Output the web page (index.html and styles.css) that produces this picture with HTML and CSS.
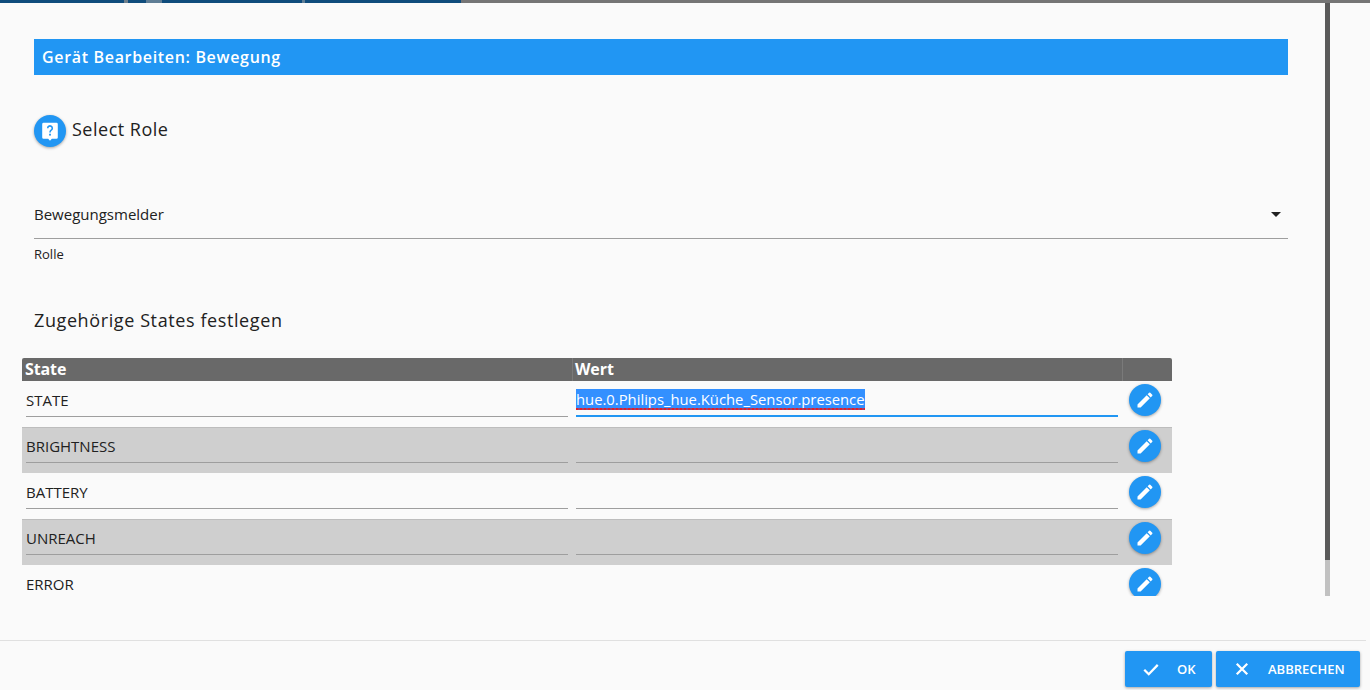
FILE: index.html
```html
<!DOCTYPE html>
<html lang="de">
<head>
<meta charset="utf-8">
<title>Gerät Bearbeiten</title>
<link rel="stylesheet" href="styles.css">
</head>
<body>
<div class="strip"><div class="strip-dark"></div><div class="strip-grey"></div></div>
<main class="dialog">
  <div class="content">
    <div class="thumb"></div>
    <h1 class="title">Gerät Bearbeiten: Bewegung</h1>
    <div class="role-head">
      <span class="fab"><svg viewBox="0 0 24 24" class="ico-role"><path d="M5 3h14a1.5 1.5 0 0 1 1.5 1.5V19a1.5 1.5 0 0 1-1.5 1.5h-5L12 22.5 10 20.5H5A1.5 1.5 0 0 1 3.500 19V4.500A1.500 1.500 0 0 1 5 3z" fill="#fff"/><path d="M9.500 9a2.500 2.500 0 1 1 3.800 2.100c-.8.500-1.300 1-1.300 2.400" fill="none" stroke="#2196f3" stroke-width="1.700"/><rect x="11" y="15" width="2" height="2" fill="#2196f3"/></svg></span>
      <h2 class="role-title">Select Role</h2>
    </div>
    <div class="select">
      <span class="select-value">Bewegungsmelder</span>
      <span class="caret"></span>
    </div>
    <div class="select-label">Rolle</div>
    <h2 class="states-title">Zugehörige States festlegen</h2>
    <div class="table">
      <div class="row head"><div class="cell">State</div><div class="cell">Wert</div><div class="cell"></div></div>
      <div class="row">
        <div class="cell"><div class="field">STATE</div></div>
        <div class="cell"><div class="field focus"><span class="sel">hue.0.Philips_hue.Küche_Sensor.presence</span></div></div>
        <div class="cell act"><span class="fab"><svg viewBox="0 0 24 24" class="ico-pen"><path d="M3 17.250V21h3.750L17.810 9.940l-3.750-3.750L3 17.250zM20.710 7.040a1 1 0 0 0 0-1.410l-2.340-2.340a1 1 0 0 0-1.410 0l-1.830 1.830 3.750 3.750 1.830-1.830z" fill="#fff"/></svg></span></div>
      </div>
      <div class="row alt">
        <div class="cell"><div class="field">BRIGHTNESS</div></div>
        <div class="cell"><div class="field"></div></div>
        <div class="cell act"><span class="fab"><svg viewBox="0 0 24 24" class="ico-pen"><path d="M3 17.250V21h3.750L17.810 9.940l-3.750-3.750L3 17.250zM20.710 7.040a1 1 0 0 0 0-1.410l-2.340-2.340a1 1 0 0 0-1.410 0l-1.830 1.830 3.750 3.750 1.830-1.830z" fill="#fff"/></svg></span></div>
      </div>
      <div class="row">
        <div class="cell"><div class="field">BATTERY</div></div>
        <div class="cell"><div class="field"></div></div>
        <div class="cell act"><span class="fab"><svg viewBox="0 0 24 24" class="ico-pen"><path d="M3 17.250V21h3.750L17.810 9.940l-3.750-3.750L3 17.250zM20.710 7.040a1 1 0 0 0 0-1.410l-2.340-2.340a1 1 0 0 0-1.410 0l-1.830 1.830 3.750 3.750 1.830-1.830z" fill="#fff"/></svg></span></div>
      </div>
      <div class="row alt">
        <div class="cell"><div class="field">UNREACH</div></div>
        <div class="cell"><div class="field"></div></div>
        <div class="cell act"><span class="fab"><svg viewBox="0 0 24 24" class="ico-pen"><path d="M3 17.250V21h3.750L17.810 9.940l-3.750-3.750L3 17.250zM20.710 7.040a1 1 0 0 0 0-1.410l-2.340-2.340a1 1 0 0 0-1.410 0l-1.830 1.830 3.750 3.750 1.830-1.830z" fill="#fff"/></svg></span></div>
      </div>
      <div class="row">
        <div class="cell"><div class="field">ERROR</div></div>
        <div class="cell"><div class="field"></div></div>
        <div class="cell act"><span class="fab"><svg viewBox="0 0 24 24" class="ico-pen"><path d="M3 17.250V21h3.750L17.810 9.940l-3.750-3.750L3 17.250zM20.710 7.040a1 1 0 0 0 0-1.410l-2.340-2.340a1 1 0 0 0-1.410 0l-1.830 1.830 3.750 3.750 1.830-1.830z" fill="#fff"/></svg></span></div>
      </div>
    </div>
  </div>
  <footer class="footer">
    <button class="btn btn-ok"><svg viewBox="0 0 24 24" class="btn-ico"><path d="M3 13l6 6L21 6.500" fill="none" stroke="#fff" stroke-width="3"/></svg><span>OK</span></button>
    <button class="btn btn-cancel"><svg viewBox="0 0 24 24" class="btn-ico"><path d="M5 5l14 14M19 5L5 19" fill="none" stroke="#fff" stroke-width="3"/></svg><span>ABBRECHEN</span></button>
  </footer>
</main>
</body>
</html>
```
FILE: styles.css
```css
* { box-sizing: border-box; }
html, body { margin: 0; height: 100%; overflow: hidden; }
body { background: #fafafa; font-family: "Open Sans", "Noto Sans", sans-serif; color: #212121; display: flex; flex-direction: column; }
h1, h2 { margin: 0; font-weight: 400; }

.strip { height: 3px; display: flex; flex: none; }
.strip-dark { width: 461px; background: linear-gradient(90deg, #0f4c7c 124px, #6f7f8b 124px, #6f7f8b 128px, #0f4c7c 128px, #0f4c7c 146px, #5f7d95 146px, #5f7d95 162px, #0f4c7c 162px, #0f4c7c 302px, #5f7d95 302px, #5f7d95 305px, #0f4c7c 305px); }
.strip-grey { flex: 1; background: #757575; }

.dialog { flex: 1; display: flex; flex-direction: column; min-height: 0; }
.content { position: relative; height: 593px; width: 1330px; flex: none; overflow: hidden; padding: 36px 42px 0 22px; }
.thumb { position: absolute; right: 0; top: 0; bottom: 0; width: 5px; background: linear-gradient(#5a5a5a 0, #5a5a5a 557px, #c1c1c1 557px); }

.title { margin-left: 12px; height: 36px; line-height: 36px; padding-left: 8px; background: #2196f3; color: #fff; font-size: 16px; font-weight: 600; letter-spacing: .67px; }

.role-head { margin: 40px 0 0 12px; height: 32px; display: flex; align-items: center; gap: 6px; }
.role-title { font-size: 18px; letter-spacing: .5px; line-height: 28px; padding-bottom: 4px; }

.fab { width: 32px; height: 32px; border-radius: 50%; background: #2196f3; display: flex; align-items: center; justify-content: center; flex: none; box-shadow: 0 1px 3px rgba(0,0,0,.35); }
.ico-role { width: 22px; height: 22px; }
.ico-pen { width: 20px; height: 20px; }

.select { margin: 52px 0 0 12px; height: 40px; border-bottom: 1px solid #9e9e9e; display: flex; align-items: center; justify-content: space-between; padding: 0 7px 9px 0; font-size: 15px; }
.caret { width: 0; height: 0; border: 5px solid transparent; border-top-color: #212121; border-bottom: 0; }
.select-label { margin: 7px 0 0 12px; font-size: 13px; line-height: 16px; }
.states-title { margin: 46px 0 0 12px; font-size: 18px; letter-spacing: .6px; line-height: 24px; }

.table { margin-top: 26px; width: 1150px; }
.row { display: grid; grid-template-columns: 550px 550px 50px; height: 46px; }
.row.head { height: 23px; background: #696969; color: #fff; font-weight: 700; font-size: 16px; letter-spacing: -.1px; line-height: 22px; border-radius: 2px 2px 0 0; }
.row.alt { background: #cfcfcf; box-shadow: inset 0 1px 0 #bdbdbd; }
.row.head .cell { padding-left: 3px; }
.row.head .cell + .cell { box-shadow: inset 1px 0 0 #7a7a7a; }
.cell { padding: 0 4px; min-width: 0; }
.field { height: 36px; border-bottom: 1px solid #9e9e9e; font-size: 15px; line-height: 20px; padding-top: 9px; }
.field.focus { border-bottom: 2px solid #2196f3; padding-top: 8px; }
.sel { display: inline-block; position: relative; background: #3390ff; color: #fff; font-size: 14.8px; line-height: 21px; }
.sel::after { content: ""; position: absolute; left: 0; right: 0; bottom: 0; height: 2px; background: repeating-linear-gradient(90deg, #e0202a 0, #e0202a 2px, #a3406f 2px, #a3406f 4px); }
.act { padding: 3px 0 0 7px; }

.footer { flex: 1; margin: 44px 4px 0 0; border-top: 1px solid #e0e0e0; display: flex; justify-content: flex-end; align-items: flex-start; gap: 4px; padding: 10px 6px 0 0; }
.btn { height: 36px; border: 0; border-radius: 2px; background: #2196f3; color: #fff; font: 600 13px "Open Sans", "Noto Sans", sans-serif; display: flex; align-items: center; padding: 0; box-shadow: 0 1px 3px rgba(0,0,0,.35); }
.btn-ok { width: 87px; padding-left: 17px; gap: 17px; }
.btn-cancel { width: 144px; padding-left: 17px; gap: 17px; }
.btn-ico { width: 18px; height: 18px; flex: none; }
```
